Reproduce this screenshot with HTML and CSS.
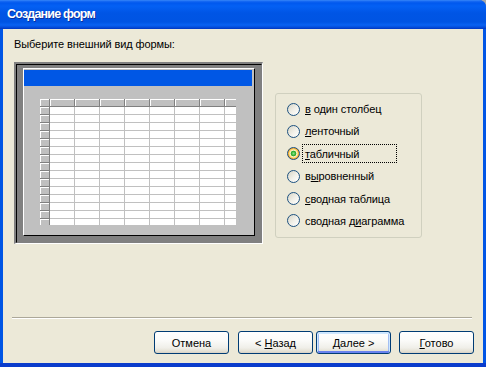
FILE: index.html
```html
<!DOCTYPE html>
<html lang="ru">
<head>
    <meta charset="UTF-8">
    <meta name="viewport" content="width=device-width, initial-scale=1.0">
    <title>Создание форм</title>
    <link rel="stylesheet" href="styles.css">
</head>
<body>
    <div class="window">
        <div class="title-bar">Создание форм</div>

        <div class="client">
            <p class="prompt">Выберите внешний вид формы:</p>

            <div class="content">
                <!-- preview of the chosen layout -->
                <div class="preview">
                    <div class="preview-frame">
                        <div class="form-panel">
                            <div class="form-caption"></div>
                            <svg class="datasheet" width="196" height="126" viewBox="0 0 196 126">
                                <defs>
                                    <pattern id="cell" x="10" y="8" width="25" height="8" patternUnits="userSpaceOnUse">
                                        <rect width="25" height="8" fill="#fff"/>
                                        <rect x="24" width="1" height="8" fill="#c0c0c0"/>
                                        <rect y="7" width="25" height="1" fill="#c0c0c0"/>
                                    </pattern>
                                    <pattern id="colhead" x="10" y="0" width="25" height="8" patternUnits="userSpaceOnUse">
                                        <rect width="25" height="8" fill="#c0c0c0"/>
                                        <rect width="24" height="1" fill="#fff"/>
                                        <rect width="1" height="7" fill="#fff"/>
                                        <rect x="24" width="1" height="8" fill="#808080"/>
                                        <rect y="7" width="25" height="1" fill="#808080"/>
                                    </pattern>
                                    <pattern id="rowhead" x="0" y="8" width="10" height="8" patternUnits="userSpaceOnUse">
                                        <rect width="10" height="8" fill="#c0c0c0"/>
                                        <rect width="9" height="1" fill="#fff"/>
                                        <rect width="1" height="7" fill="#fff"/>
                                        <rect x="9" width="1" height="8" fill="#808080"/>
                                        <rect y="7" width="10" height="1" fill="#808080"/>
                                    </pattern>
                                </defs>
                                <rect x="10" y="8" width="186" height="118" fill="url(#cell)"/>
                                <rect x="10" y="0" width="186" height="8" fill="url(#colhead)"/>
                                <rect x="0" y="8" width="10" height="118" fill="url(#rowhead)"/>
                                <rect x="0" y="0" width="10" height="8" fill="#c0c0c0"/>
                                <rect x="0" y="0" width="9" height="1" fill="#fff"/>
                                <rect x="0" y="0" width="1" height="7" fill="#fff"/>
                                <rect x="9" y="0" width="1" height="8" fill="#808080"/>
                                <rect x="0" y="7" width="10" height="1" fill="#808080"/>
                            </svg>
                        </div>
                    </div>
                </div>

                <div class="options">
                    <div class="option"><span class="radio"></span><span class="option-label"><u>в</u> один столбец</span></div>
                    <div class="option"><span class="radio"></span><span class="option-label"><u>л</u>енточный</span></div>
                    <div class="option selected"><span class="radio"></span><span class="option-label"><u>т</u>абличный</span></div>
                    <div class="option"><span class="radio"></span><span class="option-label">в<u>ы</u>ровненный</span></div>
                    <div class="option"><span class="radio"></span><span class="option-label"><u>с</u>водная таблица</span></div>
                    <div class="option"><span class="radio"></span><span class="option-label">сводная д<u>и</u>аграмма</span></div>
                </div>
            </div>

            <div class="separator"></div>

            <div class="buttons">
                <button class="btn btn-cancel">Отмена</button>
                <button class="btn btn-back">&lt; <u>Н</u>азад</button>
                <button class="btn btn-next btn-default"><u>Д</u>алее &gt;</button>
                <button class="btn btn-finish"><u>Г</u>отово</button>
            </div>
        </div>
    </div>
</body>
</html>
```

FILE: styles.css
```css
body {
    margin: 0;
    background-color: #a8a8a8;
    font-family: Tahoma, "Liberation Sans", Arial, sans-serif;
    font-size: 11px;
    color: #000;
}
.window {
    width: 486px;
    height: 367px;
    display: flex;
    flex-direction: column;
    background: linear-gradient(to bottom, #0055e5 calc(100% - 4px), #0a3ccc calc(100% - 4px));
    border-top-right-radius: 7px;
    overflow: hidden;
}
.title-bar {
    flex: none;
    height: 29px;
    box-sizing: border-box;
    padding: 6px 0 0 7px;
    color: #fff;
    font-family: "Liberation Sans", Arial, sans-serif;
    font-weight: bold;
    font-size: 12.5px;
    line-height: 17px;
    letter-spacing: -0.8px;
    text-shadow: 1px 1px 0 #0c2f9e;
    background: linear-gradient(to bottom, #3d8cf8 0, #1a6cf4 1px, #0058ee 3px, #0460f4 6px, #0055e5 13px, #0054e3 22px, #0962f2 25px, #0550de 27px, #0036c0 29px);
}
.client {
    flex: 1;
    display: flex;
    flex-direction: column;
    margin: 0 3px 4px 3px;
    background-color: #ece9d8;
}
.prompt {
    margin: 9px 0 0 11px;
    line-height: 13px;
    letter-spacing: -0.1px;
}
.content {
    display: flex;
    align-items: flex-start;
    margin: 11px 0 0 11px;
}

/* layout preview */
.preview {
    border-style: solid;
    border-width: 2px 1px 1px 2px;
    border-color: #808080 #fff #fff #808080;
}
.preview-frame {
    padding: 3px 6px 6px 6px;
    background-color: #808080;
    border: 1px solid;
    border-color: #000 #808080 #808080 #000;
}
.form-panel {
    width: 230px;
    height: 166px;
    background-color: #c0c0c0;
    border: 1px solid;
    border-color: #fff #000 #000 #fff;
}
.form-caption {
    width: 228px;
    height: 16px;
    margin-top: 1px;
    background-color: #0057e5;
}
.datasheet {
    display: block;
    margin: 13px 0 0 16px;
}

/* option group */
.options {
    width: 145px;
    height: 128px;
    margin: 31px 0 0 12px;
    padding: 7px 0 8px 0;
    border: 1px solid #d0d0bf;
    border-radius: 3px;
    display: flex;
    flex-direction: column;
    justify-content: space-between;
}
.option {
    height: 16px;
    display: flex;
    align-items: center;
    padding-left: 11px;
}
.radio {
    width: 13px;
    height: 13px;
    box-sizing: border-box;
    border: 1px solid #1c5180;
    border-radius: 50%;
    background: linear-gradient(135deg, #d8d5c6 0, #f2f1ea 55%, #fff 100%);
    flex: none;
}
.selected .radio {
    background: radial-gradient(circle, #86e386 0, #25a725 2.5px, #fff5cf 3.2px, #fcdf8c 4px, #f7b43a 5px, #f39c1c 5.5px);
}
.option-label {
    margin-left: 2px;
    padding: 1px 2px;
    border: 1px dotted transparent;
    line-height: 14px;
    white-space: nowrap;
    letter-spacing: -0.1px;
}
.selected .option-label {
    width: 89px;
    padding: 2px 2px 1px 2px;
    border-color: #000;
}
.option-label u {
    text-underline-offset: 1px;
}

/* bottom of the wizard */
.separator {
    margin: auto 11px 0 9px;
    border-top: 1px solid #aca899;
    border-bottom: 1px solid #fff;
}
.buttons {
    display: flex;
    justify-content: flex-end;
    margin: 12px 9px 9px 0;
}
.btn {
    width: 75px;
    height: 23px;
    padding: 0;
    font-family: Tahoma, "Liberation Sans", Arial, sans-serif;
    font-size: 11px;
    color: #000;
    border: 1px solid #003c74;
    border-radius: 3px;
    background: linear-gradient(to bottom, #fff 0, #fbfbf9 40%, #f0efe9 75%, #e3e0d3 92%, #d6d0c5 100%);
}
.btn-back {
    margin-left: 9px;
}
.btn-next {
    margin-left: 3px;
}
.btn-finish {
    margin-left: 8px;
}
.btn-default {
    box-shadow: inset 0 1px 0 1px #cee7ff, inset 0 -1px 0 1px #6982ee, inset 0 0 0 2px #a4bff2;
}
```
